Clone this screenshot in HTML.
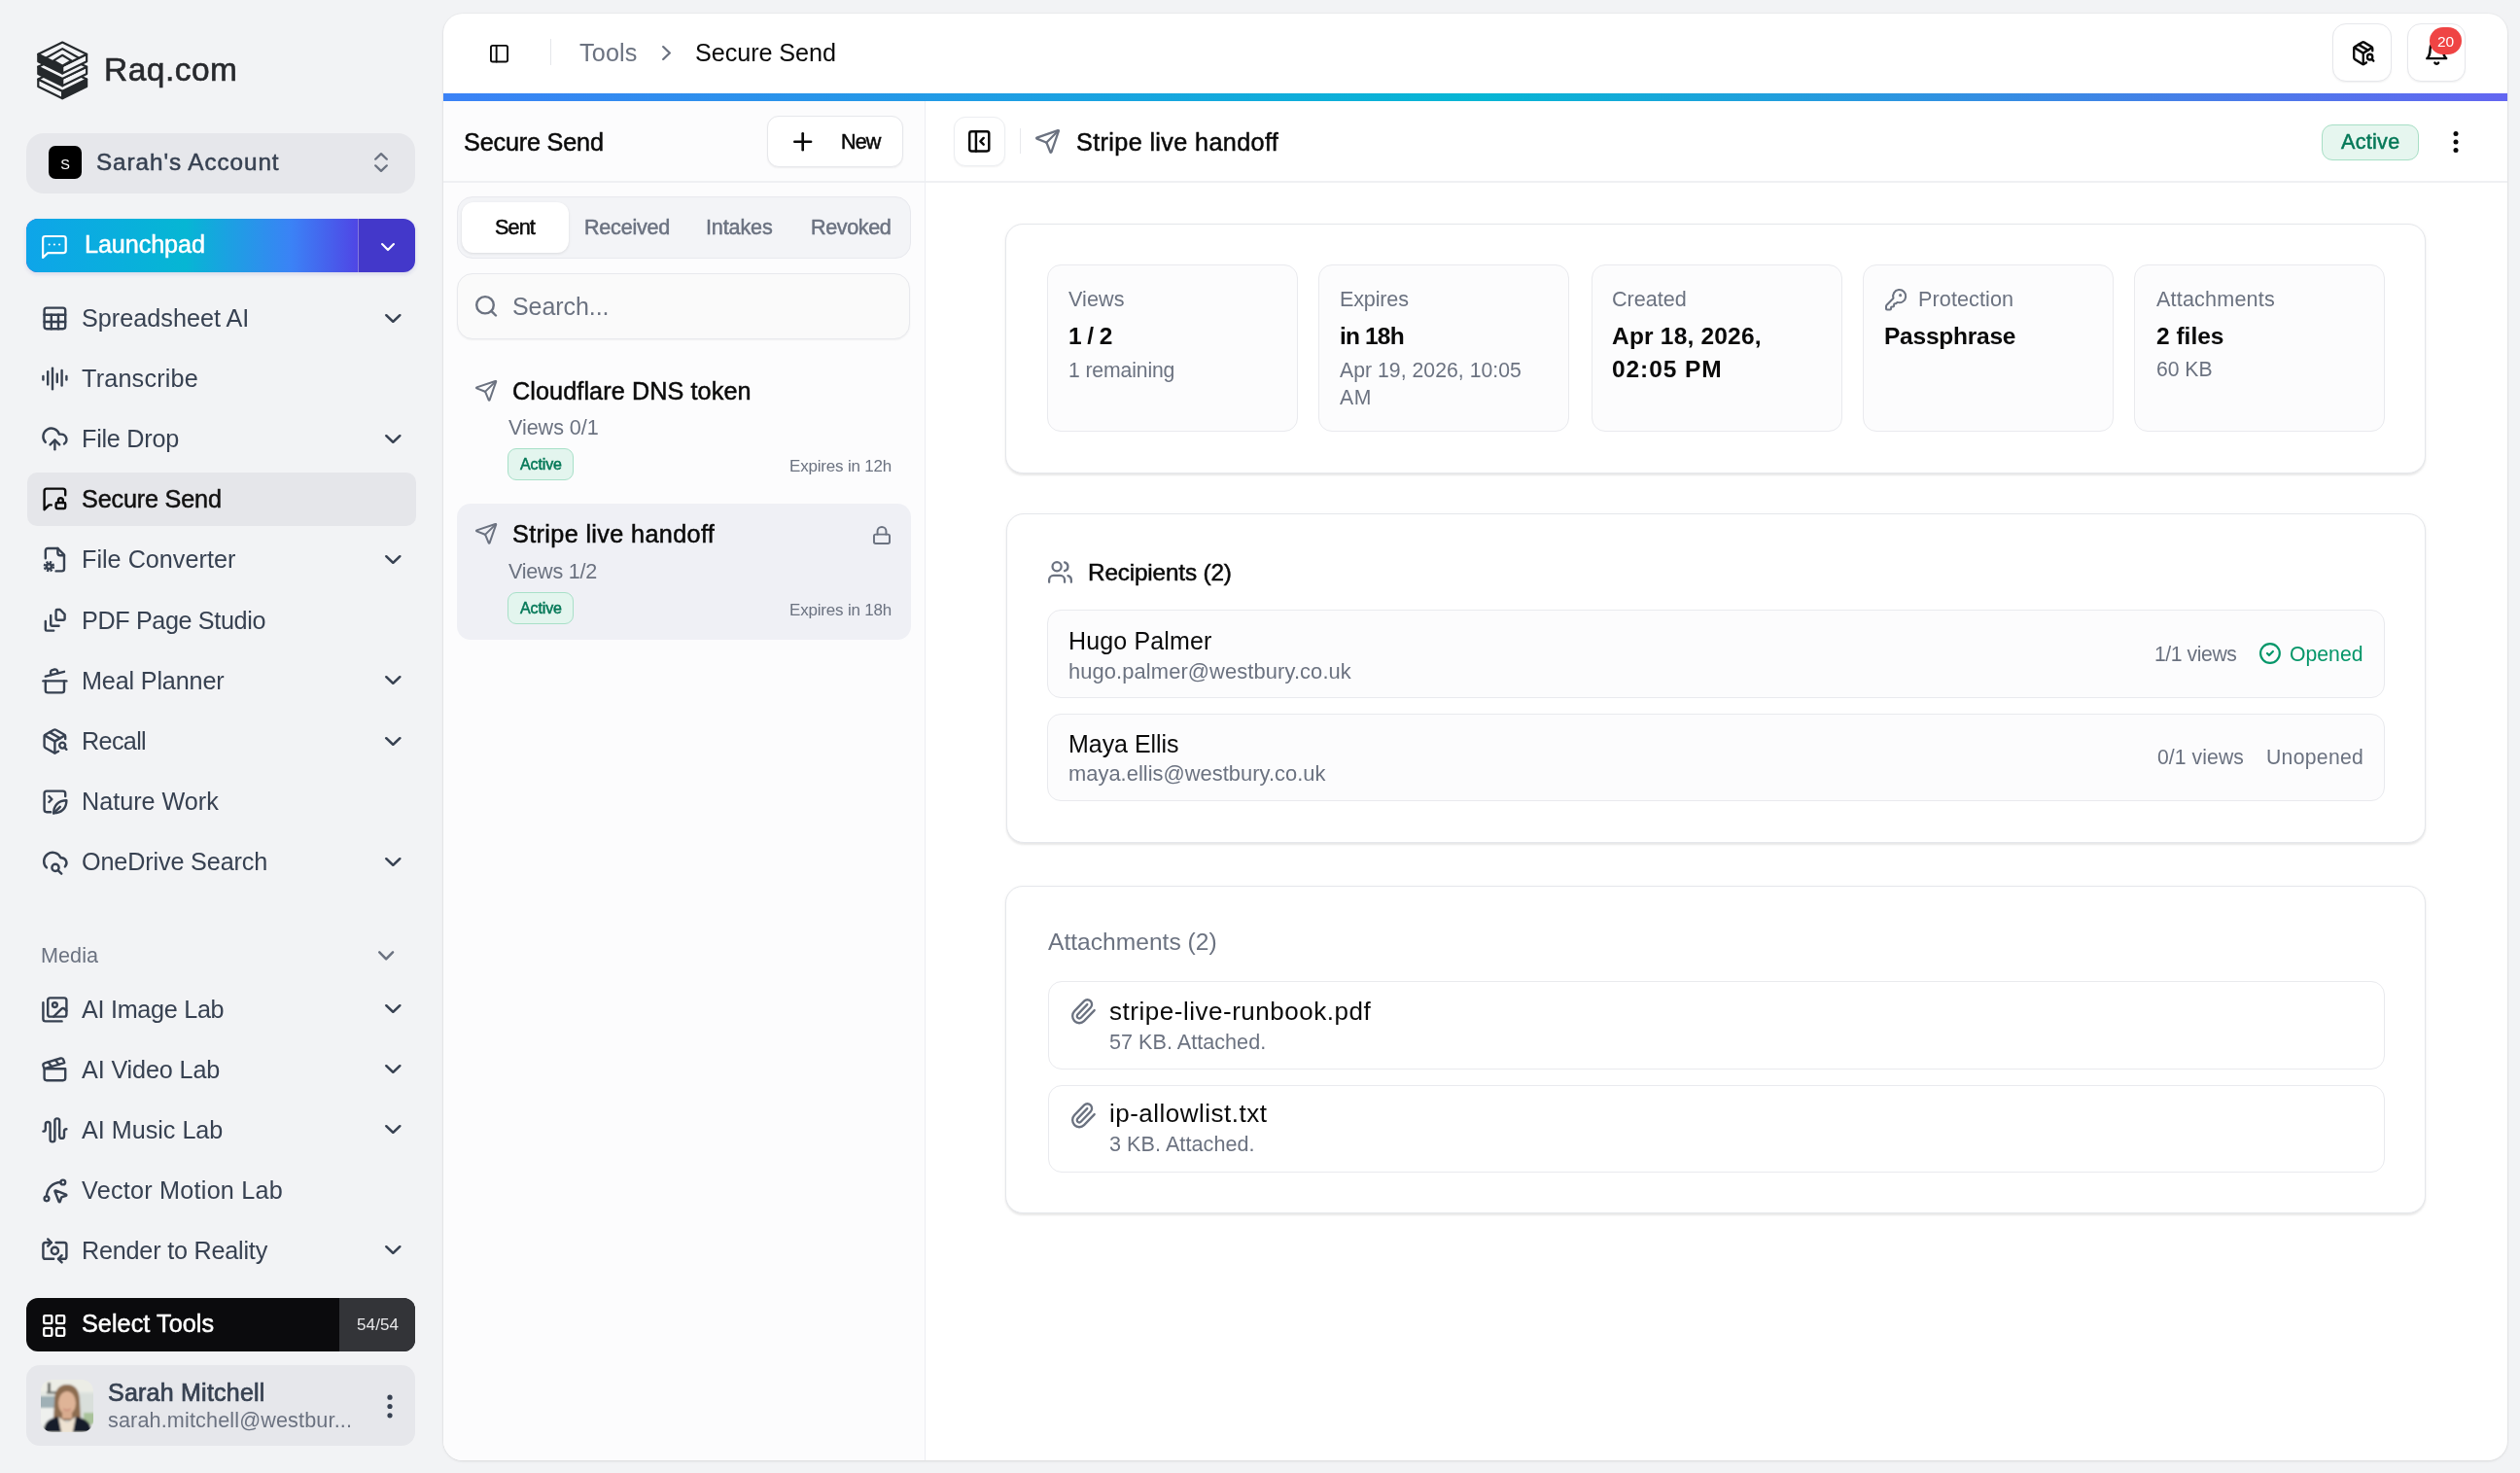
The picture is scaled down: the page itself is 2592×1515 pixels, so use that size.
<!DOCTYPE html>
<html><head><meta charset="utf-8"><title>Secure Send</title>
<style>
html,body{margin:0;padding:0}
body{width:2592px;height:1515px;overflow:hidden;position:relative;background:#f2f3f5;font-family:"Liberation Sans",sans-serif}
.t{position:absolute;line-height:1;white-space:nowrap;will-change:transform}
.b{position:absolute;box-sizing:border-box}
.i{position:absolute;overflow:visible}
</style></head><body>

<svg class="i" style="left:30px;top:35px;width:70px;height:73px" viewBox="0 0 1412 1473"><polygon points="187,939 690,1186 690,1336 187,1089" fill="#f2f3f5" stroke="#25292c" stroke-width="44" stroke-linejoin="round"/><polygon points="690,1186 1193,939 1193,1089 690,1336" fill="#25292c" stroke="#25292c" stroke-width="44" stroke-linejoin="round"/><polygon points="690,692 1193,939 690,1186 187,939" fill="#f2f3f5" stroke="#25292c" stroke-width="44" stroke-linejoin="round"/><polygon points="187,679 690,926 690,1076 187,829" fill="#25292c" stroke="#25292c" stroke-width="44" stroke-linejoin="round"/><polygon points="690,926 1193,679 1193,829 690,1076" fill="#f2f3f5" stroke="#25292c" stroke-width="44" stroke-linejoin="round"/><polygon points="690,432 1193,679 690,926 187,679" fill="#f2f3f5" stroke="#25292c" stroke-width="44" stroke-linejoin="round"/><polygon points="187,419 690,666 690,816 187,569" fill="#25292c" stroke="#25292c" stroke-width="44" stroke-linejoin="round"/><polygon points="690,666 1193,419 1193,569 690,816" fill="#f2f3f5" stroke="#25292c" stroke-width="44" stroke-linejoin="round"/><polygon points="690,172 1193,419 690,666 187,419" fill="#f2f3f5" stroke="#25292c" stroke-width="44" stroke-linejoin="round"/><polyline points="345,500 690,305 1035,500" fill="none" stroke="#25292c" stroke-width="44" stroke-linejoin="round"/><polygon points="690,440 875,552 690,662 505,552" fill="#f2f3f5" stroke="#25292c" stroke-width="44" stroke-linejoin="round"/></svg>
<div class="t " style="left:107.0px;top:54.6px;font-size:33.5px;color:#27292d;-webkit-text-stroke:0.5px currentColor;-webkit-text-stroke:0.6px currentColor;letter-spacing:0.48px;">Raq.com</div>
<div class="b" style="left:27.0px;top:136.5px;width:400.0px;height:62.0px;background:#e6e7eb;border-radius:18px"></div>
<div class="b" style="left:49.5px;top:150.0px;width:34.2px;height:34.0px;background:#000;border-radius:7px"></div>
<div class="b" style="left:49.5px;top:152px;width:34.2px;height:34px;display:flex;align-items:center;justify-content:center;color:#fff;font-size:14.5px;line-height:1;will-change:transform">S</div>
<div class="t " style="left:99.0px;top:154.9px;font-size:24.3px;color:#374151;-webkit-text-stroke:0.5px currentColor;letter-spacing:0.91px;">Sarah's Account</div>
<svg class="i" style="left:385.0px;top:157.0px;width:14.0px;height:20.0px;" viewBox="6.0 3.0 12.0 18.0" fill="none" stroke="#6b7280" stroke-width="2" stroke-linecap="round" stroke-linejoin="round" preserveAspectRatio="none"><path d="m7 15 5 5 5-5"/><path d="m7 9 5-5 5 5"/></svg>
<div class="b" style="left:27.0px;top:225.0px;width:400.0px;height:55.0px;border-radius:12px;overflow:hidden;background:#4338ca;box-shadow:0 2px 4px rgba(60,60,160,.15)"></div>
<div class="b" style="left:27px;top:225px;width:340.5px;height:55px;border-radius:12px 0 0 12px;background:linear-gradient(90deg,#0ea5e9 0%,#06b6d4 48%,#3b82f6 80%,#4f46e5 100%)"></div>
<div class="b" style="left:367.5px;top:225.0px;width:1.2px;height:55.0px;background:rgba(255,255,255,.35)"></div>
<svg class="i" style="left:42.8px;top:242.0px;width:25.8px;height:24.0px;" viewBox="2.15 2.15 19.7 19.7" fill="none" stroke="#fff" stroke-width="1.7" stroke-linecap="round" stroke-linejoin="round" preserveAspectRatio="none"><path d="M21 15a2 2 0 0 1-2 2H7l-4 4V5a2 2 0 0 1 2-2h14a2 2 0 0 1 2 2z"/><path d="M8 10h.01"/><path d="M12 10h.01"/><path d="M16 10h.01"/></svg>
<div class="t " style="left:87.0px;top:239.4px;font-size:25.2px;color:#fff;-webkit-text-stroke:0.5px currentColor;letter-spacing:-0.09px;">Launchpad</div>
<svg class="i" style="left:392.0px;top:249.5px;width:14.0px;height:8.1px;" viewBox="4.9 7.9 14.2 8.2" fill="none" stroke="#fff" stroke-width="2.2" stroke-linecap="round" stroke-linejoin="round" preserveAspectRatio="none"><path d="m6 9 6 6 6-6"/></svg>
<div class="b" style="left:27.6px;top:486.0px;width:400.0px;height:55.0px;background:#e5e6ea;border-radius:10px"></div>
<svg class="i" style="left:41.95px;top:313.00px;width:28.80px;height:28.80px;" viewBox="0 0 24 24" fill="none" stroke="#374151" stroke-width="2" stroke-linecap="round" stroke-linejoin="round"><rect width="18" height="18" x="3" y="3" rx="2"/><path d="M3 9h18"/><path d="M3 15h18"/><path d="M9 9v12"/><path d="M15 9v12"/></svg>
<div class="t " style="left:84.3px;top:314.9px;font-size:25.2px;color:#374151;letter-spacing:0.01px;">Spreadsheet AI</div>
<svg class="i" style="left:396.0px;top:322.7px;width:16.6px;height:9.0px;" viewBox="4.9 7.9 14.2 8.2" fill="none" stroke="#374151" stroke-width="2.2" stroke-linecap="round" stroke-linejoin="round" preserveAspectRatio="none"><path d="m6 9 6 6 6-6"/></svg>
<svg class="i" style="left:41.95px;top:375.12px;width:28.80px;height:28.80px;" viewBox="0 0 24 24" fill="none" stroke="#374151" stroke-width="2" stroke-linecap="round" stroke-linejoin="round"><path d="M2 10v3"/><path d="M6 6v11"/><path d="M10 3v18"/><path d="M14 8v7"/><path d="M18 5v13"/><path d="M22 10v3"/></svg>
<div class="t " style="left:84.3px;top:377.0px;font-size:25.2px;color:#374151;letter-spacing:0.19px;">Transcribe</div>
<svg class="i" style="left:41.95px;top:437.24px;width:28.80px;height:28.80px;" viewBox="0 0 24 24" fill="none" stroke="#374151" stroke-width="2" stroke-linecap="round" stroke-linejoin="round"><path d="M12 13v8"/><path d="M4 14.899A7 7 0 1 1 15.71 8h1.79a4.5 4.5 0 0 1 2.5 8.242"/><path d="m8 17 4-4 4 4"/></svg>
<div class="t " style="left:84.3px;top:439.1px;font-size:25.2px;color:#374151;letter-spacing:-0.25px;">File Drop</div>
<svg class="i" style="left:396.0px;top:446.9px;width:16.6px;height:9.0px;" viewBox="4.9 7.9 14.2 8.2" fill="none" stroke="#374151" stroke-width="2.2" stroke-linecap="round" stroke-linejoin="round" preserveAspectRatio="none"><path d="m6 9 6 6 6-6"/></svg>
<svg class="i" style="left:41.95px;top:499.36px;width:28.80px;height:28.80px;" viewBox="0 0 24 24" fill="none" stroke="#0a0a0a" stroke-width="2" stroke-linecap="round" stroke-linejoin="round"><path d="M19 15v-2a2 2 0 1 0-4 0v2"/><path d="M9 17H7l-4 4V5a2 2 0 0 1 2-2h14a2 2 0 0 1 2 2v3.5"/><rect x="13" y="15" width="8" height="5" rx="1"/></svg>
<div class="t " style="left:84.3px;top:501.2px;font-size:25.2px;color:#111;-webkit-text-stroke:0.5px currentColor;letter-spacing:-0.17px;">Secure Send</div>
<svg class="i" style="left:41.95px;top:561.48px;width:28.80px;height:28.80px;" viewBox="0 0 24 24" fill="none" stroke="#374151" stroke-width="2" stroke-linecap="round" stroke-linejoin="round"><path d="M4 11V4.5a2 2 0 0 1 2-2h8.5L20 8v12a2 2 0 0 1-2 2h-5"/><path d="M14.5 2.5v4a2 2 0 0 0 2 2H20"/><circle cx="7" cy="18" r="2.1" stroke-width="2.2"/><circle cx="7" cy="18" r="3.7" stroke-width="2.2" stroke-linecap="butt" stroke-dasharray="1.75 1.16"/></svg>
<div class="t " style="left:84.3px;top:563.3px;font-size:25.2px;color:#374151;letter-spacing:0.01px;">File Converter</div>
<svg class="i" style="left:396.0px;top:571.2px;width:16.6px;height:9.0px;" viewBox="4.9 7.9 14.2 8.2" fill="none" stroke="#374151" stroke-width="2.2" stroke-linecap="round" stroke-linejoin="round" preserveAspectRatio="none"><path d="m6 9 6 6 6-6"/></svg>
<svg class="i" style="left:41.95px;top:623.60px;width:28.80px;height:28.80px;" viewBox="0 0 24 24" fill="none" stroke="#374151" stroke-width="2" stroke-linecap="round" stroke-linejoin="round"><path d="M16.5 2.5H14a1 1 0 0 0-1 1v7a1 1 0 0 0 1 1h5.5a1 1 0 0 0 1-1V6.5Z"/><path d="M8.5 7.5v8a1 1 0 0 0 1 1H15.5"/><path d="M4 12.5v7a1 1 0 0 0 1 1H11"/></svg>
<div class="t " style="left:84.3px;top:625.5px;font-size:25.2px;color:#374151;letter-spacing:-0.37px;">PDF Page Studio</div>
<svg class="i" style="left:41.95px;top:685.72px;width:28.80px;height:28.80px;" viewBox="0 0 24 24" fill="none" stroke="#374151" stroke-width="2" stroke-linecap="round" stroke-linejoin="round"><path d="M2 12h20"/><path d="M20 12v8a2 2 0 0 1-2 2H6a2 2 0 0 1-2-2v-8"/><path d="m4 8 16-4"/><path d="m8.86 6.78-.45-1.81a2 2 0 0 1 1.45-2.43l1.94-.48a2 2 0 0 1 2.43 1.46l.45 1.8"/></svg>
<div class="t " style="left:84.3px;top:687.6px;font-size:25.2px;color:#374151;letter-spacing:-0.16px;">Meal Planner</div>
<svg class="i" style="left:396.0px;top:695.4px;width:16.6px;height:9.0px;" viewBox="4.9 7.9 14.2 8.2" fill="none" stroke="#374151" stroke-width="2.2" stroke-linecap="round" stroke-linejoin="round" preserveAspectRatio="none"><path d="m6 9 6 6 6-6"/></svg>
<svg class="i" style="left:41.95px;top:747.84px;width:28.80px;height:28.80px;" viewBox="0 0 24 24" fill="none" stroke="#374151" stroke-width="2" stroke-linecap="round" stroke-linejoin="round"><path d="M21 10V8a2 2 0 0 0-1-1.73l-7-4a2 2 0 0 0-2 0l-7 4A2 2 0 0 0 3 8v8a2 2 0 0 0 1 1.73l7 4a2 2 0 0 0 2 0l2-1.14"/><path d="m7.5 4.27 9 5.15"/><polyline points="3.29 7 12 12 20.71 7"/><line x1="12" x2="12" y1="22" y2="12"/><circle cx="18.5" cy="15.5" r="2.5"/><path d="M20.27 17.27 22 19"/></svg>
<div class="t " style="left:84.3px;top:749.7px;font-size:25.2px;color:#374151;letter-spacing:-0.66px;">Recall</div>
<svg class="i" style="left:396.0px;top:757.5px;width:16.6px;height:9.0px;" viewBox="4.9 7.9 14.2 8.2" fill="none" stroke="#374151" stroke-width="2.2" stroke-linecap="round" stroke-linejoin="round" preserveAspectRatio="none"><path d="m6 9 6 6 6-6"/></svg>
<svg class="i" style="left:41.95px;top:809.96px;width:28.80px;height:28.80px;" viewBox="0 0 24 24" fill="none" stroke="#374151" stroke-width="2" stroke-linecap="round" stroke-linejoin="round"><path d="M8.5 21H5a2 2 0 0 1-2-2V5a2 2 0 0 1 2-2h14a2 2 0 0 1 2 2v2.5"/><path d="m7 7.5 2.5 2.5-2.5 2.5"/><path d="M11 22c0-6.5 4-11 11-11 0 7-4.5 11-11 11z"/><path d="M11 22l5.5-5.5"/></svg>
<div class="t " style="left:84.3px;top:811.8px;font-size:25.2px;color:#374151;letter-spacing:-0.01px;">Nature Work</div>
<svg class="i" style="left:41.95px;top:872.08px;width:28.80px;height:28.80px;" viewBox="0 0 24 24" fill="none" stroke="#374151" stroke-width="2" stroke-linecap="round" stroke-linejoin="round"><path d="M5 17A7.5 7.5 0 1 1 17 8.5h.5a4.5 4.5 0 0 1 3.2 7.7"/><circle cx="12.5" cy="17" r="3"/><path d="m14.7 19.2 3 3"/></svg>
<div class="t " style="left:84.3px;top:873.9px;font-size:25.2px;color:#374151;letter-spacing:-0.14px;">OneDrive Search</div>
<svg class="i" style="left:396.0px;top:881.8px;width:16.6px;height:9.0px;" viewBox="4.9 7.9 14.2 8.2" fill="none" stroke="#374151" stroke-width="2.2" stroke-linecap="round" stroke-linejoin="round" preserveAspectRatio="none"><path d="m6 9 6 6 6-6"/></svg>
<div class="t " style="left:42.3px;top:971.7px;font-size:21.6px;color:#6b7280;letter-spacing:0.05px;">Media</div>
<svg class="i" style="left:388.7px;top:978.0px;width:16.3px;height:9.7px;" viewBox="4.9 7.9 14.2 8.2" fill="none" stroke="#6b7280" stroke-width="2.2" stroke-linecap="round" stroke-linejoin="round" preserveAspectRatio="none"><path d="m6 9 6 6 6-6"/></svg>
<svg class="i" style="left:41.95px;top:1023.60px;width:28.80px;height:28.80px;" viewBox="0 0 24 24" fill="none" stroke="#374151" stroke-width="2" stroke-linecap="round" stroke-linejoin="round"><path d="M18 22H4a2 2 0 0 1-2-2V6"/><path d="m22 13-1.296-1.296a2.41 2.41 0 0 0-3.408 0L11 18"/><circle cx="12" cy="8" r="2"/><rect width="16" height="16" x="6" y="2" rx="2"/></svg>
<div class="t " style="left:84.3px;top:1025.5px;font-size:25.2px;color:#374151;letter-spacing:-0.29px;">AI Image Lab</div>
<svg class="i" style="left:396.0px;top:1033.3px;width:16.6px;height:9.0px;" viewBox="4.9 7.9 14.2 8.2" fill="none" stroke="#374151" stroke-width="2.2" stroke-linecap="round" stroke-linejoin="round" preserveAspectRatio="none"><path d="m6 9 6 6 6-6"/></svg>
<svg class="i" style="left:41.95px;top:1085.60px;width:28.80px;height:28.80px;" viewBox="0 0 24 24" fill="none" stroke="#374151" stroke-width="2" stroke-linecap="round" stroke-linejoin="round"><path d="M20.2 6 3 11l-.9-2.4c-.3-1.1.3-2.2 1.3-2.5l13.5-4c1.1-.3 2.2.3 2.5 1.3Z"/><path d="m6.2 5.3 3.1 3.9"/><path d="m12.4 3.4 3.1 4"/><path d="M3 11h18v8a2 2 0 0 1-2 2H5a2 2 0 0 1-2-2Z"/></svg>
<div class="t " style="left:84.3px;top:1087.5px;font-size:25.2px;color:#374151;letter-spacing:-0.13px;">AI Video Lab</div>
<svg class="i" style="left:396.0px;top:1095.3px;width:16.6px;height:9.0px;" viewBox="4.9 7.9 14.2 8.2" fill="none" stroke="#374151" stroke-width="2.2" stroke-linecap="round" stroke-linejoin="round" preserveAspectRatio="none"><path d="m6 9 6 6 6-6"/></svg>
<svg class="i" style="left:41.95px;top:1147.60px;width:28.80px;height:28.80px;" viewBox="0 0 24 24" fill="none" stroke="#374151" stroke-width="2" stroke-linecap="round" stroke-linejoin="round"><path d="M2 13a2 2 0 0 0 2-2V7a2 2 0 0 1 4 0v13a2 2 0 0 0 4 0V4a2 2 0 0 1 4 0v13a2 2 0 0 0 4 0v-4a2 2 0 0 1 2-2"/></svg>
<div class="t " style="left:84.3px;top:1149.5px;font-size:25.2px;color:#374151;letter-spacing:-0.02px;">AI Music Lab</div>
<svg class="i" style="left:396.0px;top:1157.3px;width:16.6px;height:9.0px;" viewBox="4.9 7.9 14.2 8.2" fill="none" stroke="#374151" stroke-width="2.2" stroke-linecap="round" stroke-linejoin="round" preserveAspectRatio="none"><path d="m6 9 6 6 6-6"/></svg>
<svg class="i" style="left:41.95px;top:1209.60px;width:28.80px;height:28.80px;" viewBox="0 0 24 24" fill="none" stroke="#374151" stroke-width="2" stroke-linecap="round" stroke-linejoin="round"><path d="M12.034 12.681a.498.498 0 0 1 .647-.647l9 3.5a.5.5 0 0 1-.033.943l-3.444 1.068a1 1 0 0 0-.66.66l-1.067 3.443a.5.5 0 0 1-.943.033z"/><path d="M5 17A12 12 0 0 1 17 5"/><circle cx="19" cy="5" r="2"/><circle cx="5" cy="19" r="2"/></svg>
<div class="t " style="left:84.3px;top:1211.5px;font-size:25.2px;color:#374151;letter-spacing:0.24px;">Vector Motion Lab</div>
<svg class="i" style="left:41.95px;top:1271.60px;width:28.80px;height:28.80px;" viewBox="0 0 24 24" fill="none" stroke="#374151" stroke-width="2" stroke-linecap="round" stroke-linejoin="round"><path d="M11 19H4a2 2 0 0 1-2-2V7a2 2 0 0 1 2-2h5"/><path d="M13 5h7a2 2 0 0 1 2 2v10a2 2 0 0 1-2 2h-5"/><circle cx="12" cy="12" r="3"/><path d="m18 22-3-3 3-3"/><path d="m6 2 3 3-3 3"/></svg>
<div class="t " style="left:84.3px;top:1273.5px;font-size:25.2px;color:#374151;letter-spacing:-0.21px;">Render to Reality</div>
<svg class="i" style="left:396.0px;top:1281.3px;width:16.6px;height:9.0px;" viewBox="4.9 7.9 14.2 8.2" fill="none" stroke="#374151" stroke-width="2.2" stroke-linecap="round" stroke-linejoin="round" preserveAspectRatio="none"><path d="m6 9 6 6 6-6"/></svg>
<div class="b" style="left:27.0px;top:1335.0px;width:400.0px;height:55.0px;background:#0b0b0d;border-radius:12px;overflow:hidden"></div>
<div class="b" style="left:349.0px;top:1335.0px;width:78.0px;height:55.0px;background:#333438;border-radius:0 12px 12px 0"></div>
<svg class="i" style="left:43.8px;top:1352.0px;width:23.4px;height:23.0px;" viewBox="2.0 2.0 20.0 20.0" fill="none" stroke="#fff" stroke-width="2" stroke-linecap="round" stroke-linejoin="round" preserveAspectRatio="none"><rect width="7" height="7" x="3" y="3" rx="1"/><rect width="7" height="7" x="14" y="3" rx="1"/><rect width="7" height="7" x="14" y="14" rx="1"/><rect width="7" height="7" x="3" y="14" rx="1"/></svg>
<div class="t " style="left:84.0px;top:1349.1px;font-size:25.2px;color:#fff;-webkit-text-stroke:0.5px currentColor;letter-spacing:0.07px;">Select Tools</div>
<div class="t " style="left:367.0px;top:1354.2px;font-size:17px;color:#e8e8ea;letter-spacing:0.12px;">54/54</div>
<div class="b" style="left:27.0px;top:1404.0px;width:400.0px;height:83.0px;background:#e6e7eb;border-radius:14px"></div>
<svg class="i" style="left:42px;top:1419px;width:54px;height:54px" viewBox="0 0 54 54">
<defs><clipPath id="avc"><rect x="0" y="0" width="54" height="54" rx="12"/></clipPath>
<filter id="avb" x="-10%" y="-10%" width="120%" height="120%"><feGaussianBlur stdDeviation="0.9"/></filter></defs>
<g clip-path="url(#avc)"><g filter="url(#avb)">
<rect x="-2" y="-2" width="58" height="58" fill="#e4e7e2"/>
<rect x="-2" y="-2" width="58" height="14" fill="#ecede6"/>
<rect x="-2" y="17" width="17" height="12" fill="#9fb0b6"/>
<rect x="-2" y="29" width="17" height="18" fill="#eef0ee"/>
<rect x="40" y="14" width="16" height="26" fill="#d9dfdb"/>
<rect x="44" y="34" width="12" height="12" fill="#a9c29a"/>
<rect x="7" y="3" width="3" height="9" fill="#555a55"/>
<rect x="6" y="12" width="14" height="2.5" fill="#6d736f"/>
<path d="M27 5 C17 5 14 13 14 22 L13 42 L41 42 L40 22 C40 12 36 5 27 5 Z" fill="#8c6c50"/>
<ellipse cx="27" cy="24" rx="9" ry="12" fill="#dfb497"/>
<rect x="22" y="32" width="10" height="8" fill="#d8ab8e"/>
<path d="M3 54 C3 44 8 40 18 38 L27 44 L36 38 C46 40 52 44 52 54 Z" fill="#161b2b"/>
<path d="M18 38 L27 44 L36 38 L33 54 L21 54 Z" fill="#eee2d2"/>
<path d="M23 30 Q27 33 31 30" stroke="#c98b78" stroke-width="1.4" fill="none"/>
</g></g></svg>
<div class="t " style="left:111.4px;top:1420.4px;font-size:25px;color:#374151;-webkit-text-stroke:0.5px currentColor;-webkit-text-stroke:0.7px currentColor;letter-spacing:0.23px;">Sarah Mitchell</div>
<div class="t " style="left:111.4px;top:1449.7px;font-size:21.6px;color:#6b7280;letter-spacing:0.14px;">sarah.mitchell@westbur...</div>
<svg class="i" style="left:395px;top:1434px;width:12px;height:25px" viewBox="0 0 12 25"><g fill="#374151"><circle cx="6" cy="3.2" r="2.6"/><circle cx="6" cy="12.5" r="2.6"/><circle cx="6" cy="21.8" r="2.6"/></g></svg>
<div class="b" style="left:456.0px;top:14.0px;width:2123.0px;height:1487.5px;background:#fff;border-radius:20px;box-shadow:0 1px 3px rgba(0,0,0,.09),0 0 0 1px rgba(0,0,0,.025);overflow:hidden"></div>
<svg class="i" style="left:504.0px;top:45.6px;width:19.0px;height:18.4px;" viewBox="2.0 2.0 20.0 20.0" fill="none" stroke="#0a0a0a" stroke-width="2" stroke-linecap="round" stroke-linejoin="round" preserveAspectRatio="none"><rect width="18" height="18" x="3" y="3" rx="2"/><path d="M9 3v18"/></svg>
<div class="b" style="left:565.7px;top:40.0px;width:1.2px;height:27.0px;background:#e5e7eb"></div>
<div class="t " style="left:596.0px;top:42.4px;font-size:25.2px;color:#6b7280;letter-spacing:0.15px;">Tools</div>
<svg class="i" style="left:681.0px;top:47.0px;width:9.0px;height:15.0px;" viewBox="8.0 5.0 8.0 14.0" fill="none" stroke="#6b7280" stroke-width="2" stroke-linecap="round" stroke-linejoin="round" preserveAspectRatio="none"><path d="m9 18 6-6-6-6"/></svg>
<div class="t " style="left:715.4px;top:42.4px;font-size:25.2px;color:#0a0a0a;letter-spacing:-0.07px;">Secure Send</div>
<div class="b" style="left:2399.0px;top:24.3px;width:61.4px;height:60.1px;background:#fff;border:1.5px solid #e6e7eb;border-radius:14px;box-shadow:0 1px 2px rgba(0,0,0,.06)"></div>
<div class="b" style="left:2475.5px;top:24.3px;width:60.0px;height:60.1px;background:#fff;border:1.5px solid #e6e7eb;border-radius:14px;box-shadow:0 1px 2px rgba(0,0,0,.06)"></div>
<svg class="i" style="left:2419.0px;top:41.5px;width:23.5px;height:25.3px;" viewBox="0.8999999999999999 0.8999999999999999 22.2 22.2" fill="none" stroke="#0a0a0a" stroke-width="2.2" stroke-linecap="round" stroke-linejoin="round" preserveAspectRatio="none"><path d="M21 10V8a2 2 0 0 0-1-1.73l-7-4a2 2 0 0 0-2 0l-7 4A2 2 0 0 0 3 8v8a2 2 0 0 0 1 1.73l7 4a2 2 0 0 0 2 0l2-1.14"/><path d="m7.5 4.27 9 5.15"/><polyline points="3.29 7 12 12 20.71 7"/><line x1="12" x2="12" y1="22" y2="12"/><circle cx="18.5" cy="15.5" r="2.5"/><path d="M20.27 17.27 22 19"/></svg>
<svg class="i" style="left:2493.5px;top:41.5px;width:24.5px;height:25.0px;" viewBox="0.8999999999999999 0.8999999999999999 22.2 22.2" fill="none" stroke="#0a0a0a" stroke-width="2.2" stroke-linecap="round" stroke-linejoin="round" preserveAspectRatio="none"><path d="M6 8a6 6 0 0 1 12 0c0 7 3 9 3 9H3s3-2 3-9"/><path d="M10.3 21a1.94 1.94 0 0 0 3.4 0"/></svg>
<div class="b" style="left:2498.5px;top:28.0px;width:33.5px;height:27.5px;background:#ef4444;border-radius:14px"></div>
<div class="t " style="left:2506.7px;top:34.9px;font-size:15.5px;color:#fff;letter-spacing:-0.20px;">20</div>
<div class="b" style="left:456.0px;top:96.0px;width:2123.0px;height:8.0px;background:linear-gradient(90deg,#3b82f6 0%,#06b6d4 50%,#6366f1 100%)"></div>
<div class="b" style="left:456.0px;top:104.0px;width:496.0px;height:1397.5px;background:#fcfcfd;border-right:1.5px solid #eceef2;border-bottom-left-radius:20px"></div>
<div class="b" style="left:456.0px;top:186.0px;width:495.0px;height:1.5px;background:#eff0f3"></div>
<div class="t " style="left:477.0px;top:134.1px;font-size:25.2px;color:#0a0a0a;-webkit-text-stroke:0.5px currentColor;letter-spacing:-0.17px;">Secure Send</div>
<div class="b" style="left:789.0px;top:119.0px;width:140.0px;height:52.6px;background:#fff;border:1.5px solid #e6e7eb;border-radius:12px;box-shadow:0 1px 2px rgba(0,0,0,.06)"></div>
<svg class="i" style="left:815.6px;top:135.5px;width:19.4px;height:19.5px;" viewBox="3.9 3.9 16.2 16.2" fill="none" stroke="#0a0a0a" stroke-width="2.2" stroke-linecap="round" stroke-linejoin="round" preserveAspectRatio="none"><path d="M5 12h14"/><path d="M12 5v14"/></svg>
<div class="t " style="left:864.5px;top:134.7px;font-size:21.6px;color:#0a0a0a;-webkit-text-stroke:0.5px currentColor;letter-spacing:-0.90px;">New</div>
<div class="b" style="left:470.0px;top:201.6px;width:466.5px;height:64.4px;background:#f3f4f7;border:1.5px solid #e8e9ee;border-radius:16px"></div>
<div class="b" style="left:474.7px;top:208.0px;width:110.3px;height:51.6px;background:#fff;border-radius:12px;box-shadow:0 1px 3px rgba(0,0,0,.10)"></div>
<div class="t " style="left:508.7px;top:223.4px;font-size:21.6px;color:#0a0a0a;-webkit-text-stroke:0.5px currentColor;letter-spacing:-0.87px;">Sent</div>
<div class="t " style="left:600.9px;top:223.4px;font-size:21.6px;color:#6b7280;-webkit-text-stroke:0.5px currentColor;letter-spacing:-0.24px;">Received</div>
<div class="t " style="left:725.9px;top:223.4px;font-size:21.6px;color:#6b7280;-webkit-text-stroke:0.5px currentColor;letter-spacing:-0.15px;">Intakes</div>
<div class="t " style="left:834.0px;top:223.4px;font-size:21.6px;color:#6b7280;-webkit-text-stroke:0.5px currentColor;letter-spacing:-0.40px;">Revoked</div>
<div class="b" style="left:470.0px;top:281.4px;width:466.0px;height:67.4px;background:#fafafa;border:1.5px solid #e8e9ed;border-radius:16px;box-shadow:0 1px 2px rgba(0,0,0,.05)"></div>
<svg class="i" style="left:488.8px;top:304.0px;width:22.2px;height:21.7px;" viewBox="1.9 1.9 20.2 20.2" fill="none" stroke="#6b7280" stroke-width="2.2" stroke-linecap="round" stroke-linejoin="round" preserveAspectRatio="none"><circle cx="11" cy="11" r="8"/><path d="m21 21-4.3-4.3"/></svg>
<div class="t " style="left:526.6px;top:303.1px;font-size:25px;color:#6b7280;letter-spacing:-0.07px;">Search...</div>
<div class="b" style="left:470.4px;top:518.0px;width:466.6px;height:139.8px;background:#eff0f5;border-radius:14px"></div>
<svg class="i" style="left:488.8px;top:390.9px;width:22.2px;height:21.7px;" viewBox="1.0 1.0 22.0 22.0" fill="none" stroke="#6b7280" stroke-width="2" stroke-linecap="round" stroke-linejoin="round" preserveAspectRatio="none"><path d="M14.536 21.686a.5.5 0 0 0 .937-.024l6.5-19a.496.496 0 0 0-.635-.635l-19 6.5a.5.5 0 0 0-.024.937l7.93 3.18a2 2 0 0 1 1.112 1.11z"/><path d="m21.854 2.147-10.94 10.939"/></svg>
<div class="t " style="left:526.6px;top:389.9px;font-size:25.2px;color:#0a0a0a;-webkit-text-stroke:0.5px currentColor;letter-spacing:0.10px;">Cloudflare DNS token</div>
<div class="t " style="left:523.0px;top:428.7px;font-size:21.6px;color:#6b7280;letter-spacing:-0.07px;">Views 0/1</div>
<div class="b" style="left:522.0px;top:461.0px;width:68.4px;height:33.3px;background:#e3f5ee;border:1.5px solid #a8e0c8;border-radius:9px"></div>
<div class="t " style="left:535.0px;top:469.7px;font-size:16px;color:#047857;-webkit-text-stroke:0.5px currentColor;letter-spacing:-0.12px;">Active</div>
<div class="t " style="right:1675.2px;top:471.0px;font-size:17px;color:#6b7280;letter-spacing:-0.19px;">Expires in 12h</div>
<svg class="i" style="left:488.8px;top:537.7px;width:22.2px;height:21.7px;" viewBox="1.0 1.0 22.0 22.0" fill="none" stroke="#6b7280" stroke-width="2" stroke-linecap="round" stroke-linejoin="round" preserveAspectRatio="none"><path d="M14.536 21.686a.5.5 0 0 0 .937-.024l6.5-19a.496.496 0 0 0-.635-.635l-19 6.5a.5.5 0 0 0-.024.937l7.93 3.18a2 2 0 0 1 1.112 1.11z"/><path d="m21.854 2.147-10.94 10.939"/></svg>
<div class="t " style="left:526.6px;top:536.7px;font-size:25.2px;color:#0a0a0a;-webkit-text-stroke:0.5px currentColor;letter-spacing:0.37px;">Stripe live handoff</div>
<div class="t " style="left:523.0px;top:576.9px;font-size:21.6px;color:#6b7280;letter-spacing:-0.25px;">Views 1/2</div>
<div class="b" style="left:522.0px;top:609.2px;width:68.4px;height:33.3px;background:#e3f5ee;border:1.5px solid #a8e0c8;border-radius:9px"></div>
<div class="t " style="left:535.0px;top:617.9px;font-size:16px;color:#047857;-webkit-text-stroke:0.5px currentColor;letter-spacing:-0.12px;">Active</div>
<div class="t " style="right:1675.2px;top:619.2px;font-size:17px;color:#6b7280;letter-spacing:-0.19px;">Expires in 18h</div>
<svg class="i" style="left:898.0px;top:541.0px;width:18.0px;height:19.0px;" viewBox="1.9 0.8999999999999999 20.2 22.2" fill="none" stroke="#6b7280" stroke-width="2.2" stroke-linecap="round" stroke-linejoin="round" preserveAspectRatio="none"><rect width="18" height="11" x="3" y="11" rx="2" ry="2"/><path d="M7 11V7a5 5 0 0 1 10 0v4"/></svg>
<div class="b" style="left:952.0px;top:186.0px;width:1627.0px;height:1.5px;background:#eff0f3"></div>
<div class="b" style="left:980.7px;top:119.5px;width:53.3px;height:51.5px;background:#fff;border:1.5px solid #eceef1;border-radius:12px;box-shadow:0 1px 2px rgba(0,0,0,.05)"></div>
<svg class="i" style="left:995.5px;top:134.0px;width:22.5px;height:22.7px;" viewBox="1.9 1.9 20.2 20.2" fill="none" stroke="#0a0a0a" stroke-width="2.2" stroke-linecap="round" stroke-linejoin="round" preserveAspectRatio="none"><rect width="18" height="18" x="3" y="3" rx="2"/><path d="M9 3v18"/><path d="m16 15-3-3 3-3"/></svg>
<div class="b" style="left:1048.5px;top:132.0px;width:1.2px;height:26.0px;background:#e8e9ed"></div>
<svg class="i" style="left:1065.0px;top:133.0px;width:25.0px;height:25.0px;" viewBox="1.0 1.0 22.0 22.0" fill="none" stroke="#6b7280" stroke-width="2" stroke-linecap="round" stroke-linejoin="round" preserveAspectRatio="none"><path d="M14.536 21.686a.5.5 0 0 0 .937-.024l6.5-19a.496.496 0 0 0-.635-.635l-19 6.5a.5.5 0 0 0-.024.937l7.93 3.18a2 2 0 0 1 1.112 1.11z"/><path d="m21.854 2.147-10.94 10.939"/></svg>
<div class="t " style="left:1106.7px;top:134.3px;font-size:25.2px;color:#0a0a0a;-webkit-text-stroke:0.5px currentColor;letter-spacing:0.37px;">Stripe live handoff</div>
<div class="b" style="left:2388.0px;top:127.7px;width:100.0px;height:37.0px;background:#e6f6ef;border:1.5px solid #a7dfc5;border-radius:11px"></div>
<div class="t " style="left:2407.8px;top:134.7px;font-size:21.6px;color:#047857;-webkit-text-stroke:0.5px currentColor;letter-spacing:0.28px;">Active</div>
<svg class="i" style="left:2520px;top:134px;width:12px;height:24px" viewBox="0 0 12 24"><g fill="#0a0a0a"><circle cx="6" cy="3.5" r="2.5"/><circle cx="6" cy="12" r="2.5"/><circle cx="6" cy="20.5" r="2.5"/></g></svg>
<div class="b" style="left:1034.3px;top:230.0px;width:1460.7px;height:256.6px;background:#fff;border:1.5px solid #e5e7eb;border-radius:18px;box-shadow:0 1.5px 2px rgba(0,0,0,.07),0 1px 4px rgba(0,0,0,.04)"></div>
<div class="b" style="left:1077.3px;top:272.0px;width:258.0px;height:171.5px;background:#fcfcfd;border:1.5px solid #e9eaee;border-radius:14px"></div>
<div class="b" style="left:1356.2px;top:272.0px;width:258.0px;height:171.5px;background:#fcfcfd;border:1.5px solid #e9eaee;border-radius:14px"></div>
<div class="b" style="left:1637.0px;top:272.0px;width:258.0px;height:171.5px;background:#fcfcfd;border:1.5px solid #e9eaee;border-radius:14px"></div>
<div class="b" style="left:1916.3px;top:272.0px;width:258.0px;height:171.5px;background:#fcfcfd;border:1.5px solid #e9eaee;border-radius:14px"></div>
<div class="b" style="left:2195.2px;top:272.0px;width:258.0px;height:171.5px;background:#fcfcfd;border:1.5px solid #e9eaee;border-radius:14px"></div>
<div class="t " style="left:1099.0px;top:297.2px;font-size:21.6px;color:#6b7280;letter-spacing:0.07px;">Views</div>
<div class="t " style="left:1099.0px;top:334.1px;font-size:24.5px;color:#0a0a0a;font-weight:700;letter-spacing:-0.58px;">1 / 2</div>
<div class="t " style="left:1099.0px;top:370.1px;font-size:21.2px;color:#6b7280;letter-spacing:-0.13px;">1 remaining</div>
<div class="t " style="left:1378.4px;top:297.2px;font-size:21.6px;color:#6b7280;letter-spacing:-0.17px;">Expires</div>
<div class="t " style="left:1378.4px;top:334.1px;font-size:24.5px;color:#0a0a0a;font-weight:700;letter-spacing:-0.84px;">in 18h</div>
<div class="t " style="left:1378.4px;top:370.1px;font-size:21.2px;color:#6b7280;letter-spacing:0.04px;">Apr 19, 2026, 10:05</div>
<div class="t " style="left:1378.4px;top:398.1px;font-size:21.2px;color:#6b7280;letter-spacing:0.60px;">AM</div>
<div class="t " style="left:1658.2px;top:297.2px;font-size:21.6px;color:#6b7280;letter-spacing:0.00px;">Created</div>
<div class="t " style="left:1658.2px;top:334.1px;font-size:24.5px;color:#0a0a0a;font-weight:700;letter-spacing:0.20px;">Apr 18, 2026,</div>
<div class="t " style="left:1658.2px;top:368.3px;font-size:24.5px;color:#0a0a0a;font-weight:700;letter-spacing:0.93px;">02:05 PM</div>
<svg class="i" style="left:1938.6px;top:296.5px;width:22.2px;height:22.5px;" viewBox="1.0 1.0 22.0 22.0" fill="none" stroke="#6b7280" stroke-width="2" stroke-linecap="round" stroke-linejoin="round" preserveAspectRatio="none"><path d="M2.586 17.414A2 2 0 0 0 2 18.828V21a1 1 0 0 0 1 1h3a1 1 0 0 0 1-1v-1a1 1 0 0 1 1-1h1a1 1 0 0 0 1-1v-1a1 1 0 0 1 1-1h.172a2 2 0 0 0 1.414-.586l.814-.814a6.5 6.5 0 1 0-4-4z"/><circle cx="16.5" cy="7.5" r=".5" fill="currentColor"/></svg>
<div class="t " style="left:1972.6px;top:297.2px;font-size:21.6px;color:#6b7280;letter-spacing:0.10px;">Protection</div>
<div class="t " style="left:1938.0px;top:334.1px;font-size:24.5px;color:#0a0a0a;font-weight:700;letter-spacing:-0.23px;">Passphrase</div>
<div class="t " style="left:2217.5px;top:297.2px;font-size:21.6px;color:#6b7280;letter-spacing:0.17px;">Attachments</div>
<div class="t " style="left:2217.5px;top:334.1px;font-size:24.5px;color:#0a0a0a;font-weight:700;letter-spacing:0.00px;">2 files</div>
<div class="t " style="left:2217.5px;top:368.9px;font-size:21.2px;color:#6b7280;letter-spacing:-0.05px;">60 KB</div>
<div class="b" style="left:1034.6px;top:528.3px;width:1460.1px;height:338.9px;background:#fff;border:1.5px solid #e5e7eb;border-radius:18px;box-shadow:0 1.5px 2px rgba(0,0,0,.07),0 1px 4px rgba(0,0,0,.04)"></div>
<svg class="i" style="left:1078.0px;top:577.0px;width:25.0px;height:23.0px;" viewBox="1.0 2.0 22.0 20.0" fill="none" stroke="#6b7280" stroke-width="2" stroke-linecap="round" stroke-linejoin="round" preserveAspectRatio="none"><path d="M16 21v-2a4 4 0 0 0-4-4H6a4 4 0 0 0-4 4v2"/><circle cx="9" cy="7" r="4"/><path d="M22 21v-2a4 4 0 0 0-3-3.87"/><path d="M16 3.13a4 4 0 0 1 0 7.75"/></svg>
<div class="t " style="left:1119.0px;top:577.4px;font-size:24.3px;color:#0a0a0a;-webkit-text-stroke:0.5px currentColor;letter-spacing:-0.15px;">Recipients (2)</div>
<div class="b" style="left:1077.3px;top:627.3px;width:1376.0px;height:90.4px;background:#fcfcfd;border:1.5px solid #e9eaee;border-radius:14px"></div>
<div class="b" style="left:1077.3px;top:734.3px;width:1376.0px;height:90.2px;background:#fcfcfd;border:1.5px solid #e9eaee;border-radius:14px"></div>
<div class="t " style="left:1099.4px;top:647.1px;font-size:25px;color:#0a0a0a;letter-spacing:0.15px;">Hugo Palmer</div>
<div class="t " style="left:1099.4px;top:679.9px;font-size:21.9px;color:#6b7280;letter-spacing:0.10px;">hugo.palmer@westbury.co.uk</div>
<div class="t " style="right:291.5px;top:661.9px;font-size:21.2px;color:#6b7280;letter-spacing:-0.43px;">1/1 views</div>
<svg class="i" style="left:2324.4px;top:661.0px;width:21.9px;height:22.0px;" viewBox="0.8999999999999999 0.8999999999999999 22.2 22.2" fill="none" stroke="#059669" stroke-width="2.2" stroke-linecap="round" stroke-linejoin="round" preserveAspectRatio="none"><circle cx="12" cy="12" r="10"/><path d="m9 12 2 2 4-4"/></svg>
<div class="t " style="left:2354.8px;top:661.9px;font-size:21.2px;color:#059669;letter-spacing:0.02px;">Opened</div>
<div class="t " style="left:1099.4px;top:752.5px;font-size:25px;color:#0a0a0a;letter-spacing:-0.04px;">Maya Ellis</div>
<div class="t " style="left:1099.4px;top:784.9px;font-size:21.9px;color:#6b7280;letter-spacing:0.02px;">maya.ellis@westbury.co.uk</div>
<div class="t " style="right:284.0px;top:767.5px;font-size:21.2px;color:#6b7280;letter-spacing:0.07px;">0/1 views</div>
<div class="t " style="left:2330.7px;top:767.5px;font-size:21.2px;color:#6b7280;letter-spacing:0.29px;">Unopened</div>
<div class="b" style="left:1034.2px;top:911.2px;width:1460.8px;height:337.3px;background:#fff;border:1.5px solid #e5e7eb;border-radius:18px;box-shadow:0 1.5px 2px rgba(0,0,0,.07),0 1px 4px rgba(0,0,0,.04)"></div>
<div class="t " style="left:1078.0px;top:956.9px;font-size:24.6px;color:#6b7280;letter-spacing:0.00px;">Attachments (2)</div>
<div class="b" style="left:1078.0px;top:1008.6px;width:1375.0px;height:91.6px;background:#fff;border:1.5px solid #e9eaee;border-radius:14px"></div>
<div class="b" style="left:1078.0px;top:1115.7px;width:1375.0px;height:90.3px;background:#fff;border:1.5px solid #e9eaee;border-radius:14px"></div>
<svg class="i" style="left:1101.5px;top:1027.0px;width:25.5px;height:26.5px;" viewBox="1.0 1.0 22.0 22.0" fill="none" stroke="#6b7280" stroke-width="2" stroke-linecap="round" stroke-linejoin="round" preserveAspectRatio="none"><path d="m21.44 11.05-9.19 9.19a6 6 0 0 1-8.49-8.49l8.57-8.57A4 4 0 1 1 18 8.84l-8.59 8.57a2 2 0 0 1-2.83-2.83l8.49-8.48"/></svg>
<svg class="i" style="left:1101.5px;top:1134.0px;width:25.5px;height:26.5px;" viewBox="1.0 1.0 22.0 22.0" fill="none" stroke="#6b7280" stroke-width="2" stroke-linecap="round" stroke-linejoin="round" preserveAspectRatio="none"><path d="m21.44 11.05-9.19 9.19a6 6 0 0 1-8.49-8.49l8.57-8.57A4 4 0 1 1 18 8.84l-8.59 8.57a2 2 0 0 1-2.83-2.83l8.49-8.48"/></svg>
<div class="t " style="left:1141.2px;top:1026.6px;font-size:26px;color:#0a0a0a;letter-spacing:0.52px;">stripe-live-runbook.pdf</div>
<div class="t " style="left:1141.2px;top:1061.3px;font-size:21.6px;color:#6b7280;letter-spacing:0.02px;">57 KB. Attached.</div>
<div class="t " style="left:1141.2px;top:1132.4px;font-size:26px;color:#0a0a0a;letter-spacing:0.49px;">ip-allowlist.txt</div>
<div class="t " style="left:1141.2px;top:1165.7px;font-size:21.6px;color:#6b7280;letter-spacing:0.05px;">3 KB. Attached.</div>
</body></html>
